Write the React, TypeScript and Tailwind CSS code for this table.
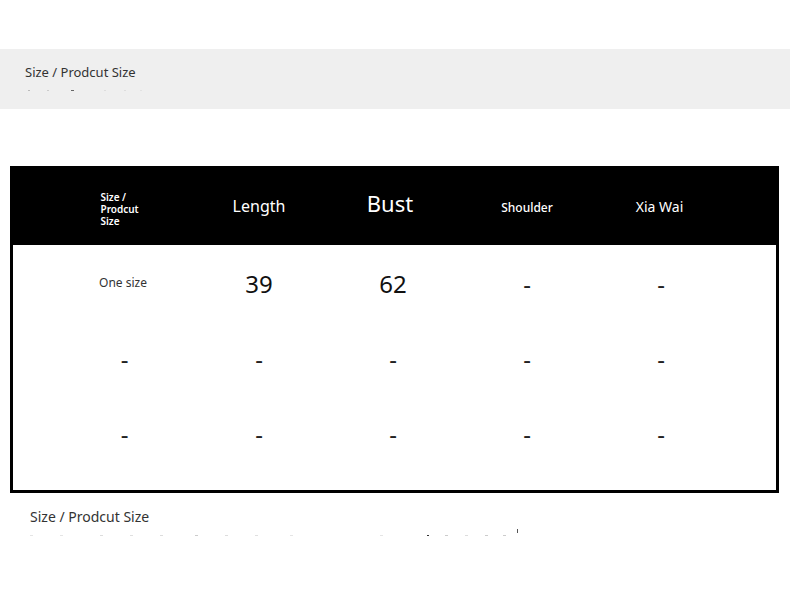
import React from "react";

const headers = [
  { label: "Length", cls: "text-[16px] mt-[1px]" },
  { label: "Bust", cls: "text-[22px] -mt-[4px] -ml-[6px]" },
  { label: "Shoulder", cls: "text-[12px] mt-[5px] font-medium" },
  { label: "Xia Wai", cls: "text-[14px] mt-[1px] -ml-[3px]" },
];

const rows = [
  ["One size", "39", "62", "-", "-"],
  ["-", "-", "-", "-", "-"],
  ["-", "-", "-", "-", "-"],
];

// faint marks of a clipped second line: [left, width, shade]
const topMarks: [number, number, string][] = [
  [28, 2, "#bbb"], [47, 2, "#ccc"], [71, 3, "#666"], [104, 2, "#ddd"], [124, 2, "#ddd"], [140, 2, "#e2e2e2"],
];
const bottomMarks: [number, number, string][] = [
  [30, 3, "#e5e5e5"], [60, 3, "#e5e5e5"], [100, 3, "#ddd"], [130, 3, "#e0e0e0"], [160, 3, "#ddd"],
  [195, 3, "#ccc"], [225, 3, "#ddd"], [255, 3, "#e0e0e0"], [290, 3, "#e5e5e5"], [380, 3, "#e5e5e5"],
  [427, 2, "#333"], [445, 3, "#ccc"], [465, 3, "#ddd"], [485, 3, "#ccc"], [503, 3, "#ccc"],
];

function Marks({ marks }: { marks: [number, number, string][] }) {
  return (
    <div className="relative h-[2px]">
      {marks.map(([l, w, c], i) => (
        <span key={i} className="absolute top-0 h-[1px]" style={{ left: l, width: w, background: c }} />
      ))}
    </div>
  );
}

function Cell({ value }: { value: string }) {
  if (value === "One size") {
    return <span className="text-[12px] text-[#333] -mt-[2px] -ml-[3px]">{value}</span>;
  }
  if (value === "-") {
    return <span className="text-[24px] leading-none text-[#222]">-</span>;
  }
  return <span className="text-[24px] text-[#111]">{value}</span>;
}

export default function App() {
  return (
    <div className="w-[790px] h-[592px] bg-white overflow-hidden" style={{ fontFamily: '"Noto Sans", "Open Sans", sans-serif' }}>
      <div className="h-[49px]" />
      <div className="h-[60px] bg-[#efefef] pt-[14px]">
        <p className="text-[13px] leading-[18px] text-[#333] pl-[25px]">Size / Prodcut Size</p>
        <div className="mt-[9px]">
          <Marks marks={topMarks} />
        </div>
      </div>

      <div className="h-[57px]" />

      <div className="mx-[10px] w-[769px] h-[327px] border-[3px] border-black border-t-0 flex flex-col">
        <div className="h-[79px] bg-black text-white flex items-center pl-[44px]">
          <div className="w-[135px] flex justify-center">
            <p className="text-[10px] leading-[12px] font-semibold w-[48px] mt-[6px]">
              Size /<br />Prodcut<br />Size
            </p>
          </div>
          {headers.map((h) => (
            <div key={h.label} className="w-[134px] flex justify-center">
              <span className={h.cls}>{h.label}</span>
            </div>
          ))}
        </div>
        <div className="pt-[1px] pl-[44px]">
          {rows.map((r, i) => (
            <div key={i} className="h-[75px] flex items-center">
              {r.map((v, j) => (
                <div key={j} className={`${j === 0 ? "w-[135px]" : "w-[134px]"} flex justify-center`}>
                  <Cell value={v} />
                </div>
              ))}
            </div>
          ))}
        </div>
      </div>

      <div className="pt-[14px]">
        <p className="text-[14px] leading-[20px] text-[#333] pl-[30px]">Size / Prodcut Size</p>
        <div className="relative mt-[8px]">
          <Marks marks={bottomMarks} />
          <span className="absolute left-[517px] -top-[6px] w-[1px] h-[4px] bg-[#555]" />
        </div>
      </div>
    </div>
  );
}
